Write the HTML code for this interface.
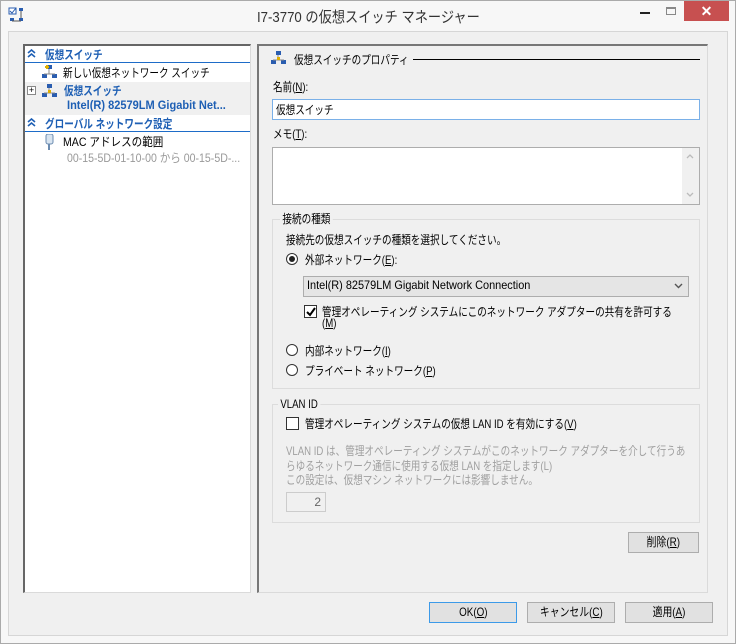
<!DOCTYPE html>
<html><head><meta charset="utf-8"><style>
*{margin:0;padding:0;box-sizing:border-box}
body{width:736px;height:644px;background:#f7f7f7;font-family:"Liberation Sans","Noto Sans CJK JP",sans-serif;font-size:12px;color:#000;position:relative;overflow:hidden}
.a{position:absolute;white-space:nowrap}
.n{transform:scaleX(.8);transform-origin:0 0}
.m{transform:scaleX(.88);transform-origin:0 0}
.win{position:absolute;left:0;top:0;width:736px;height:644px;border:1px solid #aaa;background:#f7f7f7}
.client{position:absolute;left:8px;top:31px;width:720px;height:605px;background:#f0f0f0;border:1px solid #d6d6d6}
.btn{position:absolute;height:21px;background:#e1e1e1;border:1px solid #adadad;text-align:center;line-height:19px;font-size:12px}
.btn span{display:inline-block;transform:scaleX(.82)}
u{text-decoration:underline}
.blue{color:#1e5fb4;font-weight:bold}
.grp{position:absolute;border:1px solid #dcdcdc}
.gl{position:absolute;background:#f0f0f0;padding:0 3px;line-height:14px}
.radio{position:absolute;width:12px;height:12px;border:1px solid #333;border-radius:50%;background:#fff}
.cb{position:absolute;width:13px;height:13px;border:1px solid #333;background:#fff}
.gray{color:#a0a0a0}
</style></head><body>
<div class="win"></div>
<svg class="a" style="left:8px;top:7px" width="18" height="18" viewBox="0 0 18 18">
<rect x="1" y="1" width="7" height="6" fill="#fff" stroke="#2a5db0"/><path d="M2 4l2 2 4-5" stroke="#2a5db0" fill="none"/>
<rect x="11" y="1" width="4" height="3" fill="#2a5db0"/><rect x="2" y="11" width="4" height="3" fill="#2a5db0"/><rect x="11" y="11" width="4" height="3" fill="#2a5db0"/>
<path d="M13 4v7M4 14h9" stroke="#555"/></svg>
<div class="a" style="left:257px;top:6px;font-size:15px;color:#333;transform:scaleX(.88);transform-origin:0 0">I7-3770 の仮想スイッチ マネージャー</div>
<div class="a" style="left:640px;top:12px;width:10px;height:2px;background:#222"></div>
<div class="a" style="left:666px;top:7px;width:10px;height:8px;border:1px solid #888;border-top-width:2px"></div>
<div class="a" style="left:684px;top:1px;width:45px;height:20px;background:#c75050;color:#fff;text-align:center;font-size:14px;line-height:20px;font-weight:bold">✕</div>

<div class="client"></div>

<!-- left panel -->
<div class="a" style="left:23px;top:44px;width:228px;height:549px;background:#fff;border:1px solid #dadada;border-left:2px solid #666;border-top:2px solid #666"></div>
<svg class="a" style="left:27px;top:49px" width="9" height="9"><path d="M1 4l3.5-3 3.5 3M1 8l3.5-3 3.5 3" stroke="#1e5fb4" stroke-width="1.6" fill="none"/></svg>
<div class="a blue n" style="left:45px;top:46px">仮想スイッチ</div>
<div class="a" style="left:25px;top:62px;width:225px;height:1px;background:#1e6cc8"></div>
<svg class="a" style="left:42px;top:65px" width="16" height="15"><rect x="5" y="0" width="5" height="4" fill="#2a5db0"/><rect x="0" y="9" width="5" height="4" fill="#2a5db0"/><rect x="10" y="9" width="5" height="4" fill="#2a5db0"/><path d="M7 4v5M2 9h11" stroke="#888"/><path d="M3 2h4M5 0v4" stroke="#e0b000" stroke-width="2"/></svg>
<div class="a n" style="left:63px;top:64px">新しい仮想ネットワーク スイッチ</div>
<div class="a" style="left:25px;top:82px;width:225px;height:33px;background:#f0f0f0"></div>
<div class="a" style="left:27px;top:86px;width:9px;height:9px;border:1px solid #888;background:#fff;font-size:9px;line-height:7px;text-align:center">+</div>
<svg class="a" style="left:42px;top:84px" width="16" height="15"><rect x="5" y="0" width="5" height="4" fill="#2a5db0"/><rect x="0" y="9" width="5" height="4" fill="#2a5db0"/><rect x="10" y="9" width="5" height="4" fill="#2a5db0"/><path d="M7 4v5M2 9h11" stroke="#888"/><rect x="6" y="6" width="3" height="3" fill="#e0b000"/></svg>
<div class="a blue n" style="left:64px;top:82px">仮想スイッチ</div>
<div class="a blue" style="left:67px;top:98px;font-size:12px;transform:scaleX(.92);transform-origin:0 0">Intel(R) 82579LM Gigabit Net...</div>
<svg class="a" style="left:27px;top:118px" width="9" height="9"><path d="M1 4l3.5-3 3.5 3M1 8l3.5-3 3.5 3" stroke="#1e5fb4" stroke-width="1.6" fill="none"/></svg>
<div class="a blue n" style="left:45px;top:115px">グローバル ネットワーク設定</div>
<div class="a" style="left:25px;top:131px;width:225px;height:1px;background:#1e6cc8"></div>
<svg class="a" style="left:45px;top:134px" width="10" height="16"><rect x="1" y="0" width="7" height="10" rx="2" fill="#d8e4f0" stroke="#6b8bb0"/><path d="M4 10v6" stroke="#6b8bb0" stroke-width="2"/></svg>
<div class="a m" style="left:63px;top:133px">MAC アドレスの範囲</div>
<div class="a m" style="left:67px;top:149px;color:#999">00-15-5D-01-10-00 から 00-15-5D-...</div>

<!-- right panel -->
<div class="a" style="left:257px;top:44px;width:451px;height:549px;border:1px solid #dadada;border-left:2px solid #777;border-top:2px solid #777"></div>
<svg class="a" style="left:271px;top:51px" width="16" height="15"><rect x="5" y="0" width="5" height="4" fill="#2a5db0"/><rect x="0" y="9" width="5" height="4" fill="#2a5db0"/><rect x="10" y="9" width="5" height="4" fill="#2a5db0"/><path d="M7 4v5M2 9h11" stroke="#888"/><rect x="6" y="6" width="3" height="3" fill="#e0b000"/></svg>
<div class="a n" style="left:294px;top:51px">仮想スイッチのプロパティ</div>
<div class="a" style="left:413px;top:59px;width:287px;height:1px;background:#000"></div>
<div class="a n" style="left:273px;top:78px">名前(<u>N</u>):</div>
<div class="a" style="left:272px;top:99px;width:428px;height:21px;background:#fff;border:1px solid #7ab0e8"></div>
<div class="a n" style="left:276px;top:101px">仮想スイッチ</div>
<div class="a n" style="left:273px;top:125px">メモ(<u>T</u>):</div>
<div class="a" style="left:272px;top:147px;width:428px;height:58px;background:#fff;border:1px solid #adadad"></div>
<div class="a" style="left:682px;top:148px;width:17px;height:56px;background:#f0f0f0"></div>
<svg class="a" style="left:685px;top:152px" width="10" height="50"><path d="M2 6l3-3 3 3M2 41l3 3 3-3" stroke="#bbb" fill="none" stroke-width="1.3"/></svg>

<div class="grp" style="left:272px;top:219px;width:428px;height:170px"></div>
<div class="gl n" style="left:280px;top:212px">接続の種類</div>
<div class="a n" style="left:286px;top:231px">接続先の仮想スイッチの種類を選択してください。</div>
<div class="radio" style="left:286px;top:253px"></div><div class="a" style="left:289px;top:256px;width:6px;height:6px;border-radius:50%;background:#222"></div>
<div class="a n" style="left:305px;top:251px">外部ネットワーク(<u>E</u>):</div>
<div class="a" style="left:303px;top:276px;width:386px;height:21px;background:#e5e5e5;border:1px solid #adadad"></div>
<div class="a" style="left:307px;top:278px;font-size:12px;transform:scaleX(.91);transform-origin:0 0">Intel(R) 82579LM Gigabit Network Connection</div>
<svg class="a" style="left:674px;top:283px" width="9" height="7"><path d="M1 1l3.5 3.5 3.5-3.5" stroke="#555" fill="none" stroke-width="1.4"/></svg>
<div class="cb" style="left:304px;top:305px"></div>
<svg class="a" style="left:305px;top:306px" width="12" height="12"><path d="M2 6l3 3 5-7" stroke="#000" stroke-width="2" fill="none"/></svg>
<div class="a n" style="left:322px;top:303px">管理オペレーティング システムにこのネットワーク アダプターの共有を許可する</div>
<div class="a n" style="left:322px;top:316px">(<u>M</u>)</div>
<div class="radio" style="left:286px;top:344px"></div>
<div class="a n" style="left:305px;top:342px">内部ネットワーク(<u>I</u>)</div>
<div class="radio" style="left:286px;top:364px"></div>
<div class="a n" style="left:305px;top:362px">プライベート ネットワーク(<u>P</u>)</div>

<div class="grp" style="left:272px;top:404px;width:428px;height:119px"></div>
<div class="gl n" style="left:278px;top:397px;font-size:12px">VLAN ID</div>
<div class="cb" style="left:286px;top:417px"></div>
<div class="a n" style="left:305px;top:415px">管理オペレーティング システムの仮想 LAN ID を有効にする(<u>V</u>)</div>
<div class="a gray n" style="left:286px;top:444px;line-height:14.5px">VLAN ID は、管理オペレーティング システムがこのネットワーク アダプターを介して行うあ<br>らゆるネットワーク通信に使用する仮想 LAN を指定します(L)<br>この設定は、仮想マシン ネットワークには影響しません。</div>
<div class="a" style="left:286px;top:492px;width:40px;height:20px;border:1px solid #ccc;background:#f0f0f0;text-align:right;padding-right:4px;line-height:18px;color:#666">2</div>

<div class="btn" style="left:628px;top:532px;width:71px"><span>削除(<u>R</u>)</span></div>
<div class="btn" style="left:429px;top:602px;width:88px;border-color:#3c9ae8"><span>OK(<u>O</u>)</span></div>
<div class="btn" style="left:527px;top:602px;width:88px"><span>キャンセル(<u>C</u>)</span></div>
<div class="btn" style="left:625px;top:602px;width:88px"><span>適用(<u>A</u>)</span></div>
</body></html>
